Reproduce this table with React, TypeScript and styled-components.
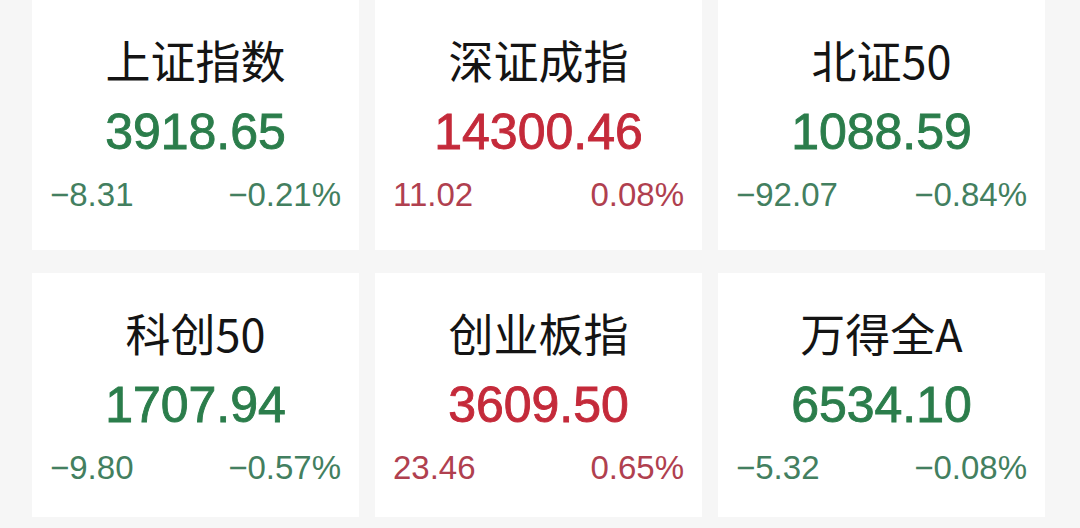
import React from "react";
import styled, { createGlobalStyle } from "styled-components";

const Global = createGlobalStyle`
  html, body { margin: 0; padding: 0; background: #f6f6f6; }
  body { font-family: "Liberation Sans", "Noto Sans CJK SC", sans-serif; }
`;

const Grid = styled.div`
  display: grid;
  grid-template-columns: repeat(3, 327px);
  grid-template-rows: 250px 244px;
  column-gap: 16px;
  row-gap: 23px;
  padding-left: 32px;
  width: 1080px;
  height: 528px;
  box-sizing: border-box;
`;

const Card = styled.div`
  background: #ffffff;
  display: flex;
  flex-direction: column;
  align-items: center;
  padding-top: 36px;
  box-sizing: border-box;
`;

const Title = styled.div`
  font-family: "Noto Sans CJK SC", sans-serif;
  font-size: 45px;
  line-height: 48px;
  color: #141414;
  font-weight: 400;
`;

const Price = styled.div<{ $up: boolean }>`
  font-family: "Liberation Sans", Arial, sans-serif;
  font-weight: 400;
  font-size: 50px;
  line-height: 56px;
  margin-top: 20px;
  -webkit-text-stroke: 0.9px currentColor;
  color: ${(p) => (p.$up ? "#c42a3a" : "#2b7d4b")};
`;

const ChangeRow = styled.div<{ $up: boolean }>`
  display: flex;
  justify-content: space-between;
  align-self: stretch;
  padding: 0 18px;
  margin-top: 17px;
  font-family: "Liberation Sans", Arial, sans-serif;
  font-weight: 400;
  font-size: 33px;
  line-height: 36px;
  color: ${(p) => (p.$up ? "#b0404f" : "#437f60")};
`;

type Item = { name: string; price: string; chg: string; pct: string; up: boolean };

const data: Item[] = [
  { name: "上证指数", price: "3918.65", chg: "−8.31", pct: "−0.21%", up: false },
  { name: "深证成指", price: "14300.46", chg: "11.02", pct: "0.08%", up: true },
  { name: "北证50", price: "1088.59", chg: "−92.07", pct: "−0.84%", up: false },
  { name: "科创50", price: "1707.94", chg: "−9.80", pct: "−0.57%", up: false },
  { name: "创业板指", price: "3609.50", chg: "23.46", pct: "0.65%", up: true },
  { name: "万得全A", price: "6534.10", chg: "−5.32", pct: "−0.08%", up: false },
];

export default function App() {
  return (
    <>
      <Global />
      <Grid>
        {data.map((d) => (
          <Card key={d.name}>
            <Title>{d.name}</Title>
            <Price $up={d.up}>{d.price}</Price>
            <ChangeRow $up={d.up}>
              <span>{d.chg}</span>
              <span>{d.pct}</span>
            </ChangeRow>
          </Card>
        ))}
      </Grid>
    </>
  );
}
